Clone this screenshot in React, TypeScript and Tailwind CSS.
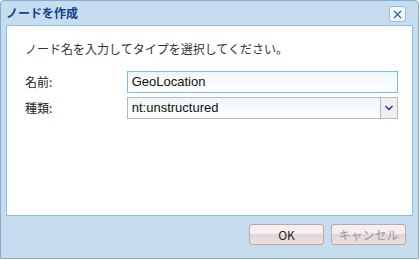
import { ChevronDown, X } from 'lucide-react';

const jp = 'font-["Noto_Sans_CJK_JP","Noto_Sans",sans-serif]';

export default function App() {
  return (
    <div className={`w-[420px] h-[260px] bg-white ${jp}`}>
      <div className="w-[419px] h-[259px] rounded-t-[4px] border border-[#86acd4] bg-[#c6dcef] flex flex-col">
        {/* Title bar */}
        <div className="h-[24px] flex items-center justify-between pl-[5px] pr-[12px]">
          <span className="text-[12px] font-bold text-[#15428b] leading-none">ノードを作成</span>
          <button className="w-[17px] h-[16px] mt-[2px] rounded-[3px] border border-[#99bbe8] bg-[#f4f8fc] flex items-center justify-center">
            <X size={13} strokeWidth={2.2} className="text-[#2f5ea8]" />
          </button>
        </div>

        {/* Body */}
        <div className="mx-[5px] h-[191px] bg-white border border-[#8fbde6] pt-[14px] pl-[18px] pr-[14px]">
          <p className="text-[12px] text-[#333] leading-[18px]">ノード名を入力してタイプを選択してください。</p>

          <div className="mt-[13px] flex items-center">
            <label className="w-[102px] text-[12px] text-[#222]">名前:</label>
            <div className="w-[272px] h-[22px] border border-[#7ebbe6] bg-gradient-to-b from-[#eef5f7] to-white flex items-center px-[4px]">
              <span className="text-[13px] text-[#111] font-['Liberation_Sans',sans-serif]">GeoLocation</span>
            </div>
          </div>

          <div className="mt-[4px] flex items-center">
            <label className="w-[102px] text-[12px] text-[#222]">種類:</label>
            <div className="w-[272px] h-[22px] border border-[#b5b8c8] flex">
              <div className="flex-1 bg-gradient-to-b from-[#eef5f7] to-white flex items-center px-[4px]">
                <span className="text-[13px] text-[#111] font-['Liberation_Sans',sans-serif]">nt:unstructured</span>
              </div>
              <div className="w-[17px] border-l border-[#b5b8c8] bg-[#f1eeee] flex items-center justify-center">
                <ChevronDown size={12} strokeWidth={3.5} className="text-[#1f4f9a]" />
              </div>
            </div>
          </div>
        </div>

        {/* Footer */}
        <div className="flex justify-end gap-[7px] pt-[8px] pr-[12px]">
          <button className="w-[75px] h-[21px] rounded-[3px] border border-[#c7a3a3] bg-[linear-gradient(#f4efef_0%,#f4efef_50%,#e3d5d5_50%,#e9dfdf_100%)] text-[12px] text-[#222] leading-none">
            OK
          </button>
          <button className="w-[75px] h-[21px] rounded-[3px] border border-[#c7a3a3] bg-[linear-gradient(#f4efef_0%,#f4efef_50%,#e3d5d5_50%,#e9dfdf_100%)] text-[12px] text-[#9a9a9a] leading-none">
            キャンセル
          </button>
        </div>
      </div>
    </div>
  );
}
